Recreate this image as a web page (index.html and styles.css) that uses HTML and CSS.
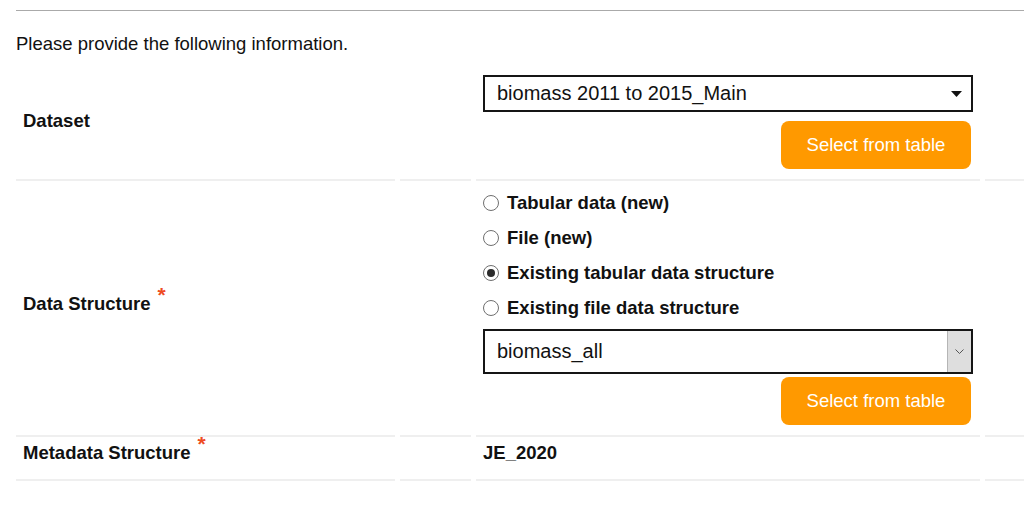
FILE: index.html
```html
<!DOCTYPE html>
<html lang="en">
<head>
<meta charset="utf-8">
<title>Dataset form</title>
<link rel="stylesheet" href="styles.css">
</head>
<body>
<div class="page">
  <hr class="rule">
  <p class="intro">Please provide the following information.</p>
  <div class="form">
    <!-- Row 1 -->
    <div class="cell label mid l1"><span>Dataset</span></div>
    <div class="cell"></div>
    <div class="cell field row1">
      <div class="select select-a">
        <span class="select-text">biomass 2011 to 2015_Main</span>
        <svg class="caret" width="11" height="6" viewBox="0 0 11 6"><path d="M0 0 H11 L5.5 6 Z" fill="#111"/></svg>
      </div>
      <button class="btn">Select from table</button>
    </div>
    <div class="cell"></div>

    <!-- Row 2 -->
    <div class="cell label mid l2"><span>Data Structure<span class="req">*</span></span></div>
    <div class="cell"></div>
    <div class="cell field row2">
      <div class="radio"><span class="dot"></span>Tabular data (new)</div>
      <div class="radio"><span class="dot"></span>File (new)</div>
      <div class="radio"><span class="dot checked"></span>Existing tabular data structure</div>
      <div class="radio"><span class="dot"></span>Existing file data structure</div>
      <div class="select select-b">
        <span class="select-text">biomass_all</span>
        <span class="arrow-box">
          <svg width="9" height="5" viewBox="0 0 9 5"><path d="M0.5 0.5 L4.5 4.5 L8.5 0.5" fill="none" stroke="#555" stroke-width="1"/></svg>
        </span>
      </div>
      <button class="btn">Select from table</button>
    </div>
    <div class="cell"></div>

    <!-- Row 3 -->
    <div class="cell label top"><span>Metadata Structure<span class="req">*</span></span></div>
    <div class="cell"></div>
    <div class="cell field row3"><strong>JE_2020</strong></div>
    <div class="cell"></div>
  </div>
</div>
</body>
</html>
```

FILE: styles.css
```css
html, body {
  margin: 0;
  padding: 0;
  background: #fff;
  overflow: hidden;
}

body {
  font-family: "Liberation Sans", Arial, sans-serif;
  font-size: 18.5px;
  color: #111;
}

.page {
  padding: 10px 0 0 16px;
}

.rule {
  margin: 0;
  border: 0;
  border-top: 1px solid #aaa;
  height: 0;
}

.intro {
  margin: 22px 0 8px;
  line-height: 22px;
}

.form {
  display: grid;
  grid-template-columns: 379px 71px 504px 1fr;
  column-gap: 5px;
}

.cell {
  border-bottom: 2px solid #efefef;
}

.label {
  display: flex;
  padding-left: 7px;
  font-weight: bold;
  line-height: 22px;
}

.label.mid {
  align-items: center;
}

.label.l1 {
  padding-bottom: 1px;
}

.label.l2 {
  padding-bottom: 9px;
}

.label.top {
  align-items: flex-start;
  padding-top: 5px;
}

.req {
  color: #ee4b22;
  font-size: 21px;
  line-height: 0;
  margin-left: 7px;
  position: relative;
  top: -8px;
}

.field {
  display: flex;
  flex-direction: column;
  align-items: flex-end;
  padding: 0 7px;
}

.row1 {
  padding-top: 12px;
  padding-bottom: 10px;
  gap: 9px;
}

.row2 {
  padding-top: 4px;
  padding-bottom: 10px;
  align-items: stretch;
}

.row3 {
  align-items: flex-start;
  padding-top: 5px;
  padding-bottom: 15px;
  line-height: 22px;
}

.select {
  box-sizing: border-box;
  width: 490px;
  display: flex;
  align-items: center;
  background: #fff;
  border: 2px solid #151515;
  font-size: 20px;
}

.select-text {
  flex: 1;
  padding-left: 12px;
}

.select-a {
  height: 37px;
}

.caret {
  margin-right: 9px;
}

.select-b {
  height: 45px;
  margin-top: 4px;
  align-self: flex-start;
}

.arrow-box {
  align-self: stretch;
  width: 23px;
  background: #dedede;
  border-left: 1px solid #b5b5b5;
  display: flex;
  align-items: center;
  justify-content: center;
}

.radio {
  height: 35px;
  display: flex;
  align-items: center;
  gap: 8px;
  font-weight: bold;
}

.dot {
  box-sizing: border-box;
  width: 16px;
  height: 16px;
  border-radius: 50%;
  border: 1px solid #6f6f6f;
  background: #fff;
  display: flex;
  align-items: center;
  justify-content: center;
}

.dot.checked::after {
  content: "";
  width: 8px;
  height: 8px;
  border-radius: 50%;
  background: #2b2b2b;
}

.btn {
  box-sizing: border-box;
  width: 190px;
  height: 48px;
  margin-right: 2px;
  border: 0;
  border-radius: 8px;
  background: #ff9900;
  color: #fff;
  font-family: "Liberation Sans", Arial, sans-serif;
  font-size: 18.5px;
  padding: 0;
}

.row2 .btn {
  align-self: flex-end;
  margin-top: 3px;
}
```
